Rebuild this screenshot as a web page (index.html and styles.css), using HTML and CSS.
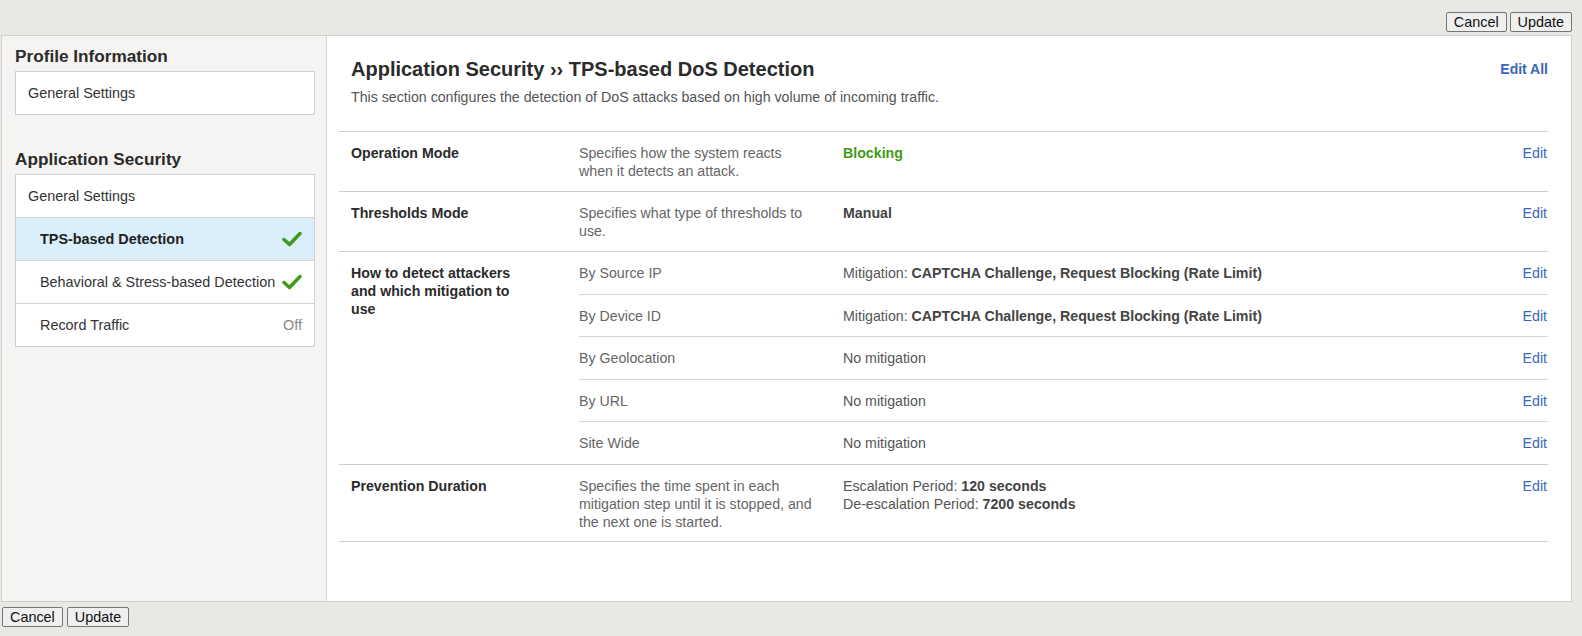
FILE: index.html
```html
<!DOCTYPE html>
<html>
<head>
<meta charset="utf-8">
<link rel="stylesheet" href="styles.css">
</head>
<body>
<div class="topbar">
  <button class="btn">Cancel</button><button class="btn">Update</button>
</div>
<div class="frame">
  <aside class="sidebar">
    <h2 class="side-title">Profile Information</h2>
    <ul class="side-box">
      <li class="side-item">General Settings</li>
    </ul>
    <h2 class="side-title second">Application Security</h2>
    <ul class="side-box">
      <li class="side-item">General Settings</li>
      <li class="side-item sub active"><span>TPS-based Detection</span><svg class="check" viewBox="0 0 20 16" width="20" height="16"><path d="M2 8.5 L7.5 13.5 L18 2.5" fill="none" stroke="#3f9a1c" stroke-width="3.5" stroke-linecap="round" stroke-linejoin="round"/></svg></li>
      <li class="side-item sub"><span>Behavioral &amp; Stress-based Detection</span><svg class="check" viewBox="0 0 20 16" width="20" height="16"><path d="M2 8.5 L7.5 13.5 L18 2.5" fill="none" stroke="#3f9a1c" stroke-width="3.5" stroke-linecap="round" stroke-linejoin="round"/></svg></li>
      <li class="side-item sub"><span>Record Traffic</span><span class="off">Off</span></li>
    </ul>
  </aside>
  <main class="main">
    <div class="header">
      <div>
        <h1 class="title">Application Security ›› TPS-based DoS Detection</h1>
        <p class="desc">This section configures the detection of DoS attacks based on high volume of incoming traffic.</p>
      </div>
      <a class="edit-all">Edit All</a>
    </div>
    <div class="table">
      <div class="row">
        <div class="label">Operation Mode</div>
        <div class="subrows">
          <div class="subrow">
            <div class="info">Specifies how the system reacts when it detects an attack.</div>
            <div class="value green">Blocking</div>
            <a class="edit">Edit</a>
          </div>
        </div>
      </div>
      <div class="row">
        <div class="label">Thresholds Mode</div>
        <div class="subrows">
          <div class="subrow">
            <div class="info">Specifies what type of thresholds to use.</div>
            <div class="value"><b>Manual</b></div>
            <a class="edit">Edit</a>
          </div>
        </div>
      </div>
      <div class="row">
        <div class="label">How to detect attackers and which mitigation to use</div>
        <div class="subrows">
          <div class="subrow short">
            <div class="info">By Source IP</div>
            <div class="value">Mitigation: <b>CAPTCHA Challenge, Request Blocking (Rate Limit)</b></div>
            <a class="edit">Edit</a>
          </div>
          <div class="subrow short">
            <div class="info">By Device ID</div>
            <div class="value">Mitigation: <b>CAPTCHA Challenge, Request Blocking (Rate Limit)</b></div>
            <a class="edit">Edit</a>
          </div>
          <div class="subrow short">
            <div class="info">By Geolocation</div>
            <div class="value">No mitigation</div>
            <a class="edit">Edit</a>
          </div>
          <div class="subrow short">
            <div class="info">By URL</div>
            <div class="value">No mitigation</div>
            <a class="edit">Edit</a>
          </div>
          <div class="subrow short">
            <div class="info">Site Wide</div>
            <div class="value">No mitigation</div>
            <a class="edit">Edit</a>
          </div>
        </div>
      </div>
      <div class="row">
        <div class="label">Prevention Duration</div>
        <div class="subrows">
          <div class="subrow last">
            <div class="info">Specifies the time spent in each mitigation step until it is stopped, and the next one is started.</div>
            <div class="value">Escalation Period: <b>120 seconds</b><br>De-escalation Period: <b>7200 seconds</b></div>
            <a class="edit">Edit</a>
          </div>
        </div>
      </div>
    </div>
  </main>
</div>
<div class="bottombar">
  <button class="btn">Cancel</button><button class="btn">Update</button>
</div>
</body>
</html>
```
FILE: styles.css
```css
* { box-sizing: border-box; }
html, body { margin: 0; padding: 0; }
body {
  background: #e9e8e5;
  font-family: "Liberation Sans", Arial, sans-serif;
  color: #333;
  width: 1582px;
  height: 636px;
  overflow: hidden;
}
.topbar {
  display: flex;
  justify-content: flex-end;
  gap: 3px;
  padding: 12px 10px 0 0;
  height: 35px;
}
.btn {
  font-family: "Liberation Sans", Arial, sans-serif;
  font-size: 14.4px;
  color: #111;
  background: #efefef;
  border: 1px solid #767676;
  border-radius: 2px;
  height: 20px;
  padding: 0 7px;
  line-height: 18px;
}
.frame {
  display: flex;
  margin-left: 1px;
  width: 1571px;
  height: 567px;
  border: 1px solid #cfcfcc;
  background: #fff;
}
.sidebar {
  width: 325px;
  flex: none;
  background: #f5f4f2;
  border-right: 1px solid #d6d5d2;
  padding: 10px 0 0 13px;
}
.side-title {
  font-size: 17.2px;
  font-weight: bold;
  margin: 0 0 5px 0;
  line-height: 20px;
  color: #2b2b2b;
}
.side-title.second { margin-top: 34px; }
.side-box {
  list-style: none;
  margin: 0;
  padding: 0;
  width: 300px;
  border: 1px solid #cfcfcf;
  background: #fff;
}
.side-item {
  height: 43px;
  display: flex;
  align-items: center;
  justify-content: space-between;
  padding: 0 12px 0 12px;
  font-size: 14.4px;
  color: #333;
  border-top: 1px solid #d4d4d4;
}
.side-item:first-child { border-top: none; height: 42px; }
.side-item.sub { padding-left: 24px; }
.side-item.active { background: #dbeefb; font-weight: bold; color: #222; }
.check { flex: none; margin-right: 0; }
.off { color: #888; }
.main {
  flex: 1;
  padding: 0 23px 0 12px;
}
.header {
  display: flex;
  justify-content: space-between;
  align-items: flex-start;
  padding: 21px 0 0 12px;
  height: 95px;
}
.title {
  margin: 0;
  font-size: 20px;
  font-weight: bold;
  line-height: 24px;
  color: #2b2b2b;
}
.desc {
  margin: 7px 0 0 0;
  font-size: 14.2px;
  color: #555;
  line-height: 18px;
}
.edit-all {
  font-size: 14px;
  font-weight: bold;
  color: #3a66b8;
  margin-top: 4px;
}
.table { border-top: 1px solid #cfcfcf; }
.row {
  display: flex;
  border-bottom: 1px solid #cfcfcf;
}
.label {
  width: 240px;
  flex: none;
  padding: 12px 43px 11px 12px;
  font-size: 14.2px;
  font-weight: bold;
  line-height: 18px;
  color: #2b2b2b;
}
.subrows { flex: 1; }
.subrow {
  display: flex;
  padding: 12px 1px 11px 0;
  font-size: 14.2px;
  line-height: 18px;
  border-top: 1px solid #d6d6d6;
}
.subrow:first-child { border-top: none; }
.subrow.short { padding-bottom: 11.5px; }
.subrow.last { padding-bottom: 10px; }
.info { width: 264px; flex: none; color: #666; padding-right: 28px; }
.value { flex: 1; color: #555; }
.value b { color: #444; }
.value.green { color: #3f9a13; font-weight: bold; }
.edit { color: #3a66b8; }
.bottombar {
  display: flex;
  gap: 4px;
  padding: 5px 0 0 2px;
}
```
